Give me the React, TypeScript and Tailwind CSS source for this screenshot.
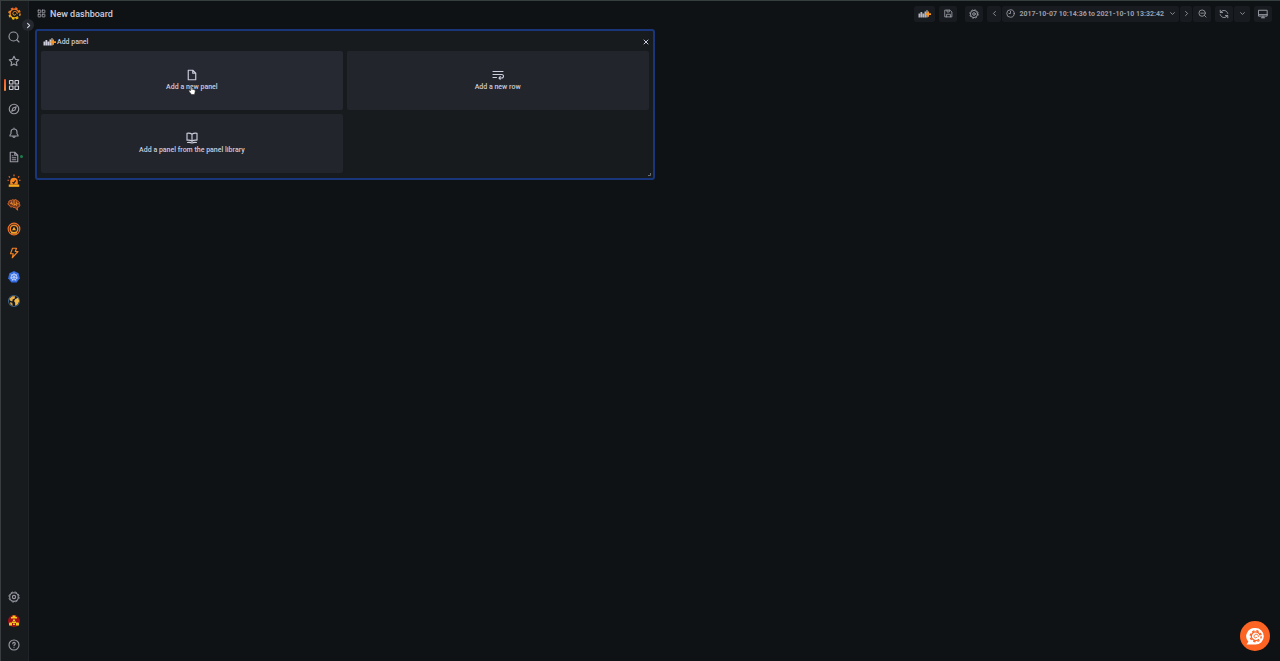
import React from 'react';

interface IconProps {
  size?: number;
  className?: string;
  children: React.ReactNode;
}

function Icon({ size = 12, className = '', children }: IconProps) {
  return (
    <svg
      width={size}
      height={size}
      viewBox="0 0 24 24"
      fill="none"
      stroke="currentColor"
      strokeWidth="2.3"
      strokeLinecap="round"
      strokeLinejoin="round"
      className={`shrink-0 ${className}`}
      aria-hidden="true"
    >
      {children}
    </svg>
  );
}

const apps = (
  <>
    <rect x="3" y="3" width="7" height="7" rx="0.5" />
    <rect x="14" y="3" width="7" height="7" rx="0.5" />
    <rect x="3" y="14" width="7" height="7" rx="0.5" />
    <rect x="14" y="14" width="7" height="7" rx="0.5" />
  </>
);

const cog = (
  <>
    <circle cx="12" cy="12" r="8.6" />
    <circle cx="12" cy="12" r="10.3" strokeWidth="1.8" strokeLinecap="butt" strokeDasharray="4.6 3.49" />
    <circle cx="12" cy="12" r="3.2" />
  </>
);

const chevronRight = <path d="m9.5 6.5 5.5 5.5-5.5 5.5" />;
const chevronLeft = <path d="M14.5 6.5 9 12l5.5 5.5" />;
const chevronDown = <path d="m7 9.5 5 5 5-5" />;

function Swirl({ stroke }: { stroke: string }) {
  return (
    <g stroke={stroke} fill="none">
      <circle cx="12" cy="12" r="10.3" strokeWidth="2.6" strokeDasharray="4.4 3.69" />
      <path d="M20 10.500A8.200 8.200 0 1 0 18 17.500" strokeWidth="2.400" />
      <path d="M17 12.500c.2-3-2-4.500-4.500-4.300-2.600.2-4 2.500-3.500 4.600.7 2.400 3.600 3.200 5 1.400" strokeWidth="1.800" strokeLinecap="round" />
    </g>
  );
}

function GrafanaLogo() {
  return (
    <svg width="13" height="13" viewBox="0 0 24 24" aria-hidden="true">
      <defs>
        <linearGradient id="brand" x1="0" y1="24" x2="0" y2="0" gradientUnits="userSpaceOnUse">
          <stop stopColor="#fbca0a" />
          <stop offset="1" stopColor="#f05a28" />
        </linearGradient>
      </defs>
      <Swirl stroke="url(#brand)" />
    </svg>
  );
}

function AddPanelIcon() {
  return (
    <svg width="13" height="10" viewBox="0 0 26 20" className="shrink-0" aria-hidden="true">
      <path
        fill="currentColor"
        d="M1 9h3.500v8H1zM5 6h3.500v11H5zM9 9h3.500v8H9zM13 5h3.500v12H13zM17 2h2v15h-2z"
      />
      <path fill="#f79520" d="M18.500 5h3.500v3.500h4v3.500h-4v3.500h-3.500V12H15V8.500h3.500z" />
    </svg>
  );
}

const topLinks = [
  { label: 'Search', icon: <Icon><circle cx="11" cy="11" r="9" /><path d="m17.5 17.500 4.500 4.500" /></Icon> },
  {
    label: 'Starred',
    icon: <Icon><path d="m12 2.5 2.9 6.2 6.6.9-4.8 4.7 1.2 6.8-5.9-3.2-5.9 3.2 1.2-6.8L2.5 9.6l6.600-.9Z" /></Icon>,
  },
  { label: 'Dashboards', active: true, icon: <Icon>{apps}</Icon> },
  {
    label: 'Explore',
    icon: <Icon><circle cx="12" cy="12" r="9.5" /><path d="m16.500 7.500-2.600 6.400-6.400 2.600 2.600-6.400Z" /></Icon>,
  },
  {
    label: 'Alerting',
    icon: (
      <Icon>
        <path d="M4 18h16v-2l-2-2.500V10a6 6 0 0 0-12 0v3.500L4 16ZM12 4V2M9.500 18.500c.5 3 4.500 3 5 0" />
      </Icon>
    ),
  },
  {
    label: 'Reporting',
    badge: true,
    icon: <Icon><path d="M13.500 2.500H4.500v19h15v-13Zm0 0v6h6M8.500 9.500h1.500M8.500 13.500h7M8.500 17.500h7" /></Icon>,
  },
  {
    label: 'Incidents',
    icon: (
      <svg width="14" height="14" viewBox="0 0 24 24" fill="none" aria-hidden="true">
        <path d="M5.500 18v-5a6.500 6.500 0 0 1 13 0v5Z" fill="#f9851c" />
        <path d="M3 18h18v4H3Z" fill="#f7a820" />
        <path d="M12 4V1M5 6 3 4M19 6l2-2M3 11H1M23 11h-2" stroke="#ee6a24" strokeWidth="2" />
        <path d="m9.500 14 2 2 3.500-5" stroke="#181b1f" strokeWidth="2" />
      </svg>
    ),
  },
  {
    label: 'Machine learning',
    icon: (
      <svg width="14" height="14" viewBox="0 0 24 24" fill="none" stroke="#e9702a" strokeWidth="1.600" aria-hidden="true">
        <path
          d="M8 4c2-2 3.500-1 4 0 2-2 5-1 5.500 1 3 0 4.500 3 3.500 5 2 2 1 5-1.500 5.500l-2 .5.500 5-4-5c-2 1-4 0-4.500-1-3 1-5-.5-5-2-3-1-3.500-4-1.500-5C2 6 4.500 3.500 8 4Z"
          fill="#6b3222"
        />
        <path d="M12 4v10M5 9h4v3M8 6v3M16 6v4h4M12 11h4v3" stroke="#f0912c" />
      </svg>
    ),
  },
  {
    label: 'Synthetic monitoring',
    icon: (
      <svg width="14" height="14" viewBox="0 0 24 24" fill="none" aria-hidden="true">
        <circle cx="12" cy="12" r="10" stroke="#ec7228" strokeWidth="2" />
        <circle cx="12" cy="12" r="6.500" stroke="#f08a28" strokeWidth="2.500" />
        <path d="m12 8 3.500 6h-7Z" fill="#f7a528" />
        <path d="M7 18.500h10" stroke="#f7a528" strokeWidth="3" />
      </svg>
    ),
  },
  {
    label: 'Load testing',
    icon: <Icon className="text-[#f38325]"><path d="M9 2.500h8L14.500 9H20L8.500 21.500l2-8H5Z" /></Icon>,
  },
  {
    label: 'Kubernetes',
    icon: (
      <svg width="14" height="14" viewBox="0 0 24 24" fill="none" aria-hidden="true">
        <path d="m12 1.500 8 4 2 8.500-5.500 7.500h-9L2 14l2-8.500Z" fill="#326ce5" />
        <circle cx="12" cy="12" r="5" stroke="#c5d5f8" strokeWidth="1.500" />
        <path d="M12 4.500v7.500l6-5M12 12l7 2M12 12l3.500 7M12 12l-3.500 7M12 12l-7 2M12 12 6 7" stroke="#c5d5f8" strokeWidth="1.200" />
      </svg>
    ),
  },
  {
    label: 'Worldmap',
    icon: (
      <svg width="14" height="14" viewBox="0 0 24 24" aria-hidden="true">
        <circle cx="12" cy="12" r="9.500" fill="#14171c" stroke="#3a5e85" strokeWidth="1.800" />
        <path d="m4 8 5-4 5 0-1 4-3 1-1 4-4-2Z" fill="#e8b04a" />
        <path d="m14 9 5-3 2 6-3 6-4 2 0-5-2-3Z" fill="#f0b948" />
        <path d="m5 14 4 1 1 5-4-2Z" fill="#d6a447" />
      </svg>
    ),
  },
];

const bottomLinks = [
  { label: 'Configuration', icon: <Icon>{cog}</Icon> },
  {
    label: 'Profile',
    icon: (
      <svg width="12" height="12" viewBox="0 0 24 24" aria-hidden="true">
        <circle cx="12" cy="12" r="12" fill="#a30f16" />
        <path d="M9 1h6v3h3v3H6V4h3ZM10 9h4v3h-4ZM8 13h8v3H8ZM3 15h5v6H2v-4ZM16 15h5l1 2v4h-6ZM10 17h4v3h-4Z" fill="#f2c81d" />
      </svg>
    ),
  },
  {
    label: 'Help',
    icon: (
      <Icon>
        <circle cx="12" cy="12" r="10" />
        <path d="M9.500 9.500c0-3.500 5-3.500 5 0 0 2-2.500 2-2.500 4M12 17v.1" />
      </Icon>
    ),
  },
];

interface NavLinkProps {
  label: string;
  icon: React.ReactNode;
  active?: boolean;
  badge?: boolean;
}

function NavLink({ label, icon, active, badge }: NavLinkProps) {
  return (
    <a
      href="#"
      aria-label={label}
      className={`relative flex h-6 items-center justify-center ${active ? 'text-[#c9cad3]' : 'text-[#9899a3]'}`}
    >
      {active && (
        <span className="absolute inset-y-1.5 left-[3px] w-0.5 rounded-sm bg-linear-to-b from-[#f0552b] to-[#fa8a3c]" />
      )}
      {icon}
      {badge && <span className="absolute top-2.5 right-1 size-[3px] rounded-full bg-[#1a7f4b]" />}
    </a>
  );
}

interface ToolButtonProps {
  label: string;
  className?: string;
  children: React.ReactNode;
}

function ToolButton({ label, className = '', children }: ToolButtonProps) {
  return (
    <button
      aria-label={label}
      className={`flex h-4 items-center justify-center rounded-xs bg-[#181b1f] text-[#9c9da6] ${className}`}
    >
      {children}
    </button>
  );
}

function AddTile({ label, icon, hover }: { label: string; icon: React.ReactNode; hover?: boolean }) {
  return (
    <button
      className={`relative flex h-[59px] flex-col items-center justify-center gap-px rounded-xs text-[7px] leading-[10px] font-medium text-[#ccccdc] ${hover ? 'bg-[#272932]' : 'bg-[#22252b]'}`}
    >
      {icon}
      {label}
      {hover && (
        <svg width="8" height="9" viewBox="0 0 16 18" className="absolute top-[35px] left-1/2 -translate-x-1/2" aria-hidden="true">
          <path
            d="M5 1.500c1-1 2.500-.5 2.500 1V7c1-1 2-.5 2.500 0 1-.5 2 0 2.300.8 1.200-.3 2.200.4 2.200 1.700 0 3-1 4-1.500 7.500H6.500C6 14.500 2.500 12 1.500 9.500c0-1.500 1.500-1.500 2.500-.5l1 1Z"
            fill="#fff"
            stroke="#222"
          />
        </svg>
      )}
    </button>
  );
}

export default function App() {
  return (
    <div className="flex min-h-screen border-t border-[#373e3e] bg-[#0f1215] font-[Roboto,sans-serif] text-[#ccccdc]">
      {/* SIDE MENU */}
      <nav className="relative flex w-[29px] shrink-0 flex-col border-x border-r-[#202328] border-l-[#3a3d40] bg-[#181b1e] pr-px pb-1">
        <a href="#" aria-label="Home" className="flex h-6 items-center justify-center">
          <GrafanaLogo />
        </a>
        {topLinks.map(l => (
          <NavLink key={l.label} {...l} />
        ))}
        <div className="flex-1" />
        {bottomLinks.map(l => (
          <NavLink key={l.label} {...l} />
        ))}
        <button
          aria-label="Expand menu"
          className="absolute top-[18px] -right-1.5 flex size-3 items-center justify-center rounded-full bg-[#25282e]"
        >
          <Icon size={9} className="stroke-[3]">{chevronRight}</Icon>
        </button>
      </nav>

      <div className="flex min-w-0 flex-1 flex-col">
        {/* TOOLBAR */}
        <header className="flex h-[25px] items-center px-2">
          <Icon size={9} className="text-[#9c9da6]">{apps}</Icon>
          <h1 className="ml-1 flex-1 text-[9px] leading-3 font-medium">New dashboard</h1>

          <div className="flex items-center gap-1">
            <ToolButton label="Add panel" className="w-[21px] text-[#b4b5bf]">
              <AddPanelIcon />
            </ToolButton>
            <ToolButton label="Save dashboard" className="mr-1 w-[18px]">
              <Icon size={9}>
                <path d="M3 3h13l5 5v13H3ZM8 3v5h6V3M7 21v-7h10v7" />
              </Icon>
            </ToolButton>
            <ToolButton label="Dashboard settings" className="w-[18px]">
              <Icon size={10}>{cog}</Icon>
            </ToolButton>
            <div className="flex gap-px">
              <ToolButton label="Move time range backwards" className="w-3.5">
                <Icon size={9}>{chevronLeft}</Icon>
              </ToolButton>
              <button className="flex h-4 items-center gap-1 rounded-xs bg-[#181b1f] pr-0.5 pl-1 text-[7px] leading-[10px] font-bold text-[#9c9da6]">
                <Icon size={9}>
                  <circle cx="12" cy="12" r="10" />
                  <path d="M12 6v6H8" />
                </Icon>
                <span>2017-10-07 10:14:36 to 2021-10-10 13:32:42</span>
                <Icon size={9}>{chevronDown}</Icon>
              </button>
              <ToolButton label="Move time range forwards" className="w-3">
                <Icon size={9}>{chevronRight}</Icon>
              </ToolButton>
              <ToolButton label="Zoom out time range" className="w-[18px]">
                <Icon size={9}>
                  <circle cx="11" cy="11" r="8.500" />
                  <path d="m17.500 17.500 4 4M7.500 11h7" />
                </Icon>
              </ToolButton>
            </div>
            <div className="flex gap-px">
              <ToolButton label="Refresh dashboard" className="w-[18px]">
                <Icon size={10}>
                  <path d="M3 3v5.500h5.500M3.500 8.500C7 1.500 18 1 21 10.500M21 21v-5.500h-5.500M20.500 15.500C17 22.500 6 23 3 13.500" />
                </Icon>
              </ToolButton>
              <ToolButton label="Set auto refresh interval" className="w-4">
                <Icon size={9}>{chevronDown}</Icon>
              </ToolButton>
            </div>
            <ToolButton label="Cycle view mode" className="w-[18px]">
              <Icon size={10}>
                <path d="M2 3h20v14H2ZM2 13.500h20M12 17v4M8 21h8" />
              </Icon>
            </ToolButton>
          </div>
        </header>

        <main className="px-1.5 pt-[3px]">
          {/* ADD PANEL */}
          <section className="relative w-1/2 rounded-[3px] border-2 border-[#19367a] bg-[#181b1d] px-1 pb-[5px]">
            <div className="flex h-5 items-center gap-px pt-0.5 pl-0.5">
              <AddPanelIcon />
              <h2 className="flex-1 text-[7px] leading-[10px] font-medium">Add panel</h2>
              <button aria-label="Close" className="-mr-px">
                <Icon size={8} className="stroke-[3]"><path d="m6 6 12 12M18 6 6 18" /></Icon>
              </button>
            </div>
            <div className="grid grid-cols-2 gap-1">
              <AddTile
                hover
                label="Add a new panel"
                icon={<Icon><path d="M13.500 2.500h-9v19h15v-13Zm0 0v6h6" /></Icon>}
              />
              <AddTile
                label="Add a new row"
                icon={<Icon><path d="M2 5h20M2 11h17.500a3.500 3.500 0 0 1 0 7H14M2 17h7M16.500 15 14 18l2.500 2.500" /></Icon>}
              />
              <AddTile
                label="Add a panel from the panel library"
                icon={
                  <Icon>
                    <path d="M12 4.500C9 2 5 2 2 2.500v14c3-.5 7-.5 10 2 3-2.500 7-2.500 10-2v-14c-3-.5-7-.5-10 2Zm0 0v14M3 21c3-.5 6-.5 9 1 3-1.500 6-1.500 9-1" />
                  </Icon>
                }
              />
            </div>
            <svg width="3" height="3" viewBox="0 0 3 3" className="absolute right-0.5 bottom-0.5" aria-hidden="true">
              <path d="M2.500 0v2.500H0" fill="none" stroke="#6b6d75" />
            </svg>
          </section>
        </main>
      </div>

      {/* CHAT */}
      <button
        aria-label="Open chat"
        className="fixed right-2.5 bottom-2.5 flex size-[30px] items-center justify-center rounded-full bg-[#fc6423]"
      >
        <svg width="19" height="19" viewBox="0 0 40 40" aria-hidden="true">
          <path d="M20 2a17.500 17.500 0 1 1 0 35H1l4-6A17.500 17.500 0 0 1 20 2Z" fill="#fff" />
          <g transform="translate(7 6) scale(1.120)">
            <Swirl stroke="#fc6423" />
          </g>
        </svg>
      </button>
    </div>
  );
}
